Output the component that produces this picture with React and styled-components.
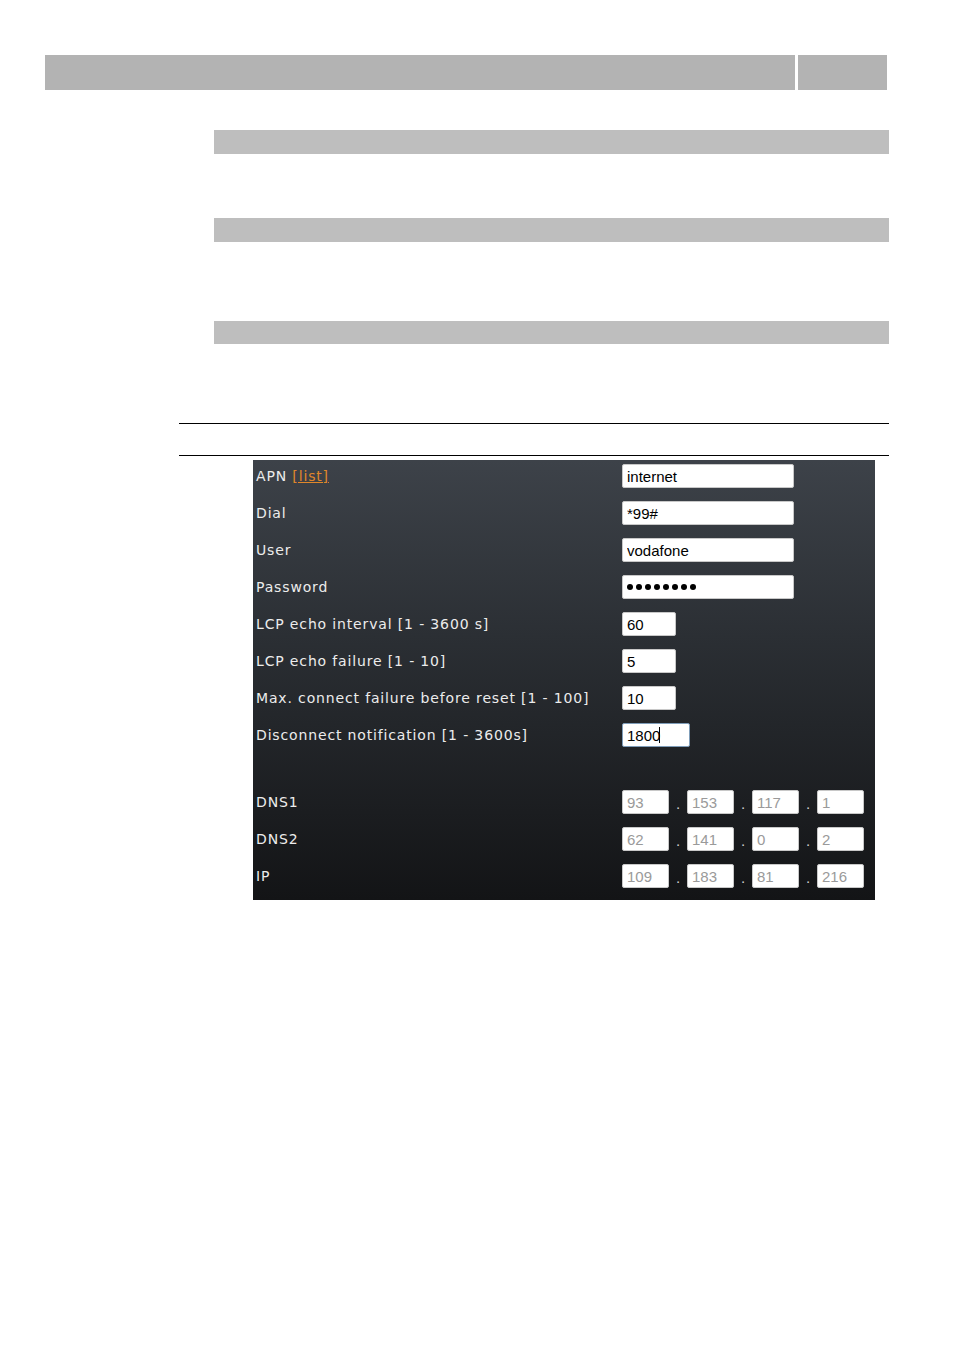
import React from "react";
import styled, { createGlobalStyle } from "styled-components";

const Global = createGlobalStyle`
  html, body { margin: 0; padding: 0; background: #ffffff; }
  body { font-family: "DejaVu Sans", Verdana, sans-serif; }
`;

const Page = styled.div`
  width: 954px;
  height: 1349px;
  padding-top: 55px;
  box-sizing: border-box;
`;

const HeaderRow = styled.div`
  display: flex;
  gap: 3px;
  margin-left: 45px;
  height: 35px;
`;

const HeaderCell = styled.div`
  width: ${(p) => p.$w}px;
  height: 100%;
  background: #b3b3b3;
`;

const SubBar = styled.div`
  margin-left: 214px;
  width: 675px;
  height: ${(p) => p.$h || 24}px;
  margin-top: ${(p) => p.$top}px;
  background: #bebebe;
`;

const Rule = styled.div`
  margin-left: 179px;
  width: 710px;
  height: 1px;
  background: #000;
  margin-top: ${(p) => p.$top}px;
`;

const Panel = styled.div`
  margin-left: 253px;
  margin-top: 4px;
  width: 622px;
  height: 440px;
  box-sizing: border-box;
  padding: 4px 0 0 3px;
  background: linear-gradient(180deg, #3d4249 0%, #2b2f34 40%, #131416 100%);
`;

const Row = styled.div`
  display: grid;
  grid-template-columns: 366px 1fr;
  align-items: center;
  height: 24px;
  margin-bottom: 13px;
`;

const Spacer = styled.div`
  height: 30px;
`;

const Label = styled.div`
  color: #ececec;
  font-size: 14px;
  letter-spacing: 0.85px;
  line-height: 24px;
  white-space: nowrap;
`;

const Link = styled.a`
  color: #e0872a;
  text-decoration: underline;
`;

const Field = styled.input`
  box-sizing: border-box;
  width: ${(p) => p.$w}px;
  height: 24px;
  margin: 0;
  padding: 0 0 0 4px;
  border: 1px solid ${(p) => (p.$focus ? "#7f9db9" : "#c8c8c8")};
  border-radius: 2px;
  background: #fff;
  color: ${(p) => (p.$dim ? "#9a9a9a" : "#000")};
  font-family: "Liberation Sans", Arial, sans-serif;
  font-size: 15px;
  outline: none;
`;

const Dots = styled.div`
  box-sizing: border-box;
  width: 172px;
  height: 24px;
  padding-left: 4px;
  border: 1px solid #c8c8c8;
  border-radius: 2px;
  background: #fff;
  display: flex;
  align-items: center;
  gap: 3px;
`;

const Dot = styled.span`
  width: 6px;
  height: 6px;
  border-radius: 50%;
  background: #000;
`;

const FocusWrap = styled.div`
  position: relative;
  width: 68px;
  height: 24px;
`;

const Caret = styled.span`
  position: absolute;
  left: 37px;
  top: 4px;
  width: 1px;
  height: 16px;
  background: #000;
`;

const IpGroup = styled.div`
  display: flex;
  align-items: center;
  height: 24px;
`;

const IpSep = styled.span`
  width: 18px;
  height: 24px;
  display: flex;
  align-items: flex-end;
  justify-content: center;
  color: #cfcfcf;
  font-family: "Liberation Sans", Arial, sans-serif;
  font-size: 15px;
  line-height: 20px;
`;

const textRows = [
  { label: "Dial", value: "*99#", w: 172 },
  { label: "User", value: "vodafone", w: 172 },
];

const numRows = [
  { label: "LCP echo interval [1 - 3600 s]", value: "60" },
  { label: "LCP echo failure [1 - 10]", value: "5" },
  { label: "Max. connect failure before reset [1 - 100]", value: "10" },
];

const ipRows = [
  { label: "DNS1", parts: ["93", "153", "117", "1"] },
  { label: "DNS2", parts: ["62", "141", "0", "2"] },
  { label: "IP", parts: ["109", "183", "81", "216"] },
];

export default function App() {
  return (
    <Page>
      <Global />
      <HeaderRow>
        <HeaderCell $w={750} />
        <HeaderCell $w={89} />
      </HeaderRow>
      <SubBar $top={40} />
      <SubBar $top={64} />
      <SubBar $top={79} $h={23} />
      <Rule $top={79} />
      <Rule $top={31} />
      <Panel>
        <Row>
          <Label>
            APN <Link>[list]</Link>
          </Label>
          <Field $w={172} defaultValue="internet" readOnly />
        </Row>
        {textRows.map((r) => (
          <Row key={r.label}>
            <Label>{r.label}</Label>
            <Field $w={r.w} defaultValue={r.value} readOnly />
          </Row>
        ))}
        <Row>
          <Label>Password</Label>
          <Dots>
            {Array.from({ length: 8 }).map((_, i) => (
              <Dot key={i} />
            ))}
          </Dots>
        </Row>
        {numRows.map((r) => (
          <Row key={r.label}>
            <Label>{r.label}</Label>
            <Field $w={54} defaultValue={r.value} readOnly />
          </Row>
        ))}
        <Row>
          <Label>Disconnect notification [1 - 3600s]</Label>
          <FocusWrap>
            <Field $w={68} $focus defaultValue="1800" readOnly />
            <Caret />
          </FocusWrap>
        </Row>
        <Spacer />
        {ipRows.map((r) => (
          <Row key={r.label}>
            <Label>{r.label}</Label>
            <IpGroup>
              {r.parts.map((p, i) => (
                <React.Fragment key={i}>
                  {i > 0 && <IpSep>.</IpSep>}
                  <Field $w={47} $dim defaultValue={p} readOnly />
                </React.Fragment>
              ))}
            </IpGroup>
          </Row>
        ))}
      </Panel>
    </Page>
  );
}
